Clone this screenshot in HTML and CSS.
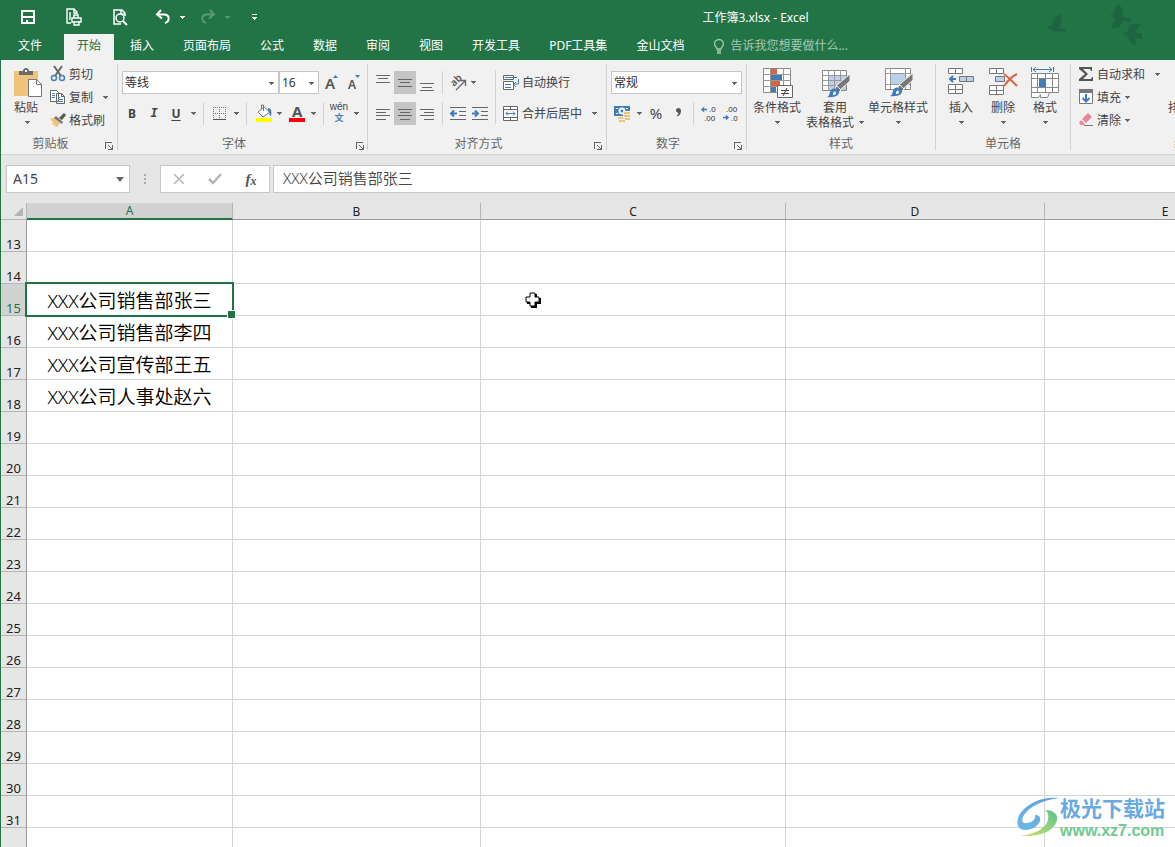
FILE: index.html
```html
<!DOCTYPE html>
<html lang="zh-CN">
<head>
<meta charset="utf-8">
<title>工作簿3.xlsx - Excel</title>
<link rel="stylesheet" href="styles.css">
</head>
<body>
<svg class="defs" aria-hidden="true">
  <symbol id="down" viewBox="0 0 5 3"><path d="M0 0h5v1H0zM1 1h3v1H1zM2 2h1v1H2z"/></symbol>
  <symbol id="launcher" viewBox="0 0 8 8"><path d="M0 0h7v1H1v6H0z M7 3h1v5H3V7h3V6H5V5H4V4H3V3h1v1h1v1h1v1h1z"/></symbol>
  <symbol id="brush" viewBox="0 0 24 24"><path d="M23 0v7L13 16l-4-4z" fill="#777" stroke="#f1f1f1"/><path d="M10 12l4 4-2 2-4-4z" fill="#777" stroke="#f1f1f1"/><path d="M0 23c3-1 2-4 4-7 2-2 7-2 8 1 1 4-4 7-12 6z" fill="#3f7cb8"/><path d="M6 19c1-2 3-2 3 0s-2 2-3 2z" fill="#fff"/></symbol>
</svg>
<div class="app">
  <header class="top">
    <svg class="birds" viewBox="0 0 110 60" aria-hidden="true"><path d="M27 15l2 0c1 5-1 9-1 13l5 1 1 3-6-1-4 1-4-2-6-3 6-1c0-5 3-9 7-11zM85 5c2-2 6 2 6 12l7 1 1 4-8-1c-3 7-6 7-11 7-1-4 3-6 3-9l-5-4 4-1c0-4 1-7 3-9zM97 25c5-2 9-2 12 0-2 3-5 4-5 7l6 2v5l-7-1 1 5c-1 1-1 3 0 3-5-2-8-6-8-10l-5-3 5-1z"/></svg>
    <div class="titlebar">
      <div class="quick">
        <button aria-label="保存"><svg width="16" height="16"><path fill="#fff" fill-rule="evenodd" d="M1 1h14v14H1zM3 3v4h10V3zM3 9v4h2v-4zm8 0v4h2v-4zM5 10v3h1v-2h2v2h3v-4H5z"/></svg></button>
        <button aria-label="打印"><svg width="18" height="18" fill="none" stroke="#fff" stroke-width="1.4"><path d="M6 15H2V1h7l3 3v2M9 1v4h3M5 4v8"/><path d="M9 10V7h4v3M7 10h9v4H7zM9 13v4h5v-4"/></svg></button>
        <button aria-label="打印预览"><svg width="16" height="17" fill="none" stroke="#fff" stroke-width="1.5"><path d="M9 15H2V1h8l3 3v3M9 1v4h4"/><circle cx="8" cy="9" r="4"/><path d="M11 12l4 4" stroke-width="2"/></svg></button>
        <button aria-label="撤消"><svg width="16" height="16" fill="none" stroke="#fff" stroke-width="2"><path d="M6 1L2 5.500l5 4M2 5.500h7c6 0 6 7 1 8.500"/></svg></button>
        <button class="mini" aria-label="撤消选项"><svg width="5" height="3"><use href="#down"/></svg></button>
        <button class="faded" aria-label="恢复"><svg width="16" height="16" fill="none" stroke="#fff" stroke-width="2"><path d="M10 1l4 4.500-5 4M14 5.500H7c-6 0-6 7-1 8.500"/></svg></button>
        <button class="mini faded" aria-label="恢复选项"><svg width="5" height="3"><use href="#down"/></svg></button>
        <button class="custom" aria-label="自定义快速访问工具栏"><svg width="5" height="7"><path fill="#fff" d="M0 0h5v1H0zM0 3h5v1H0zM1 4h3v1H1zM2 5h1v1H2z"/></svg></button>
      </div>
      <h1>工作簿3.xlsx - Excel</h1>
    </div>
    <nav class="tabs">
      <button class="file">文件</button><button class="active">开始</button><button>插入</button><button>页面布局</button><button>公式</button><button>数据</button><button>审阅</button><button>视图</button><button>开发工具</button><button>PDF工具集</button><button>金山文档</button>
      <button class="tell"><svg width="12" height="15" fill="none" stroke="#a5c9b3" stroke-width="1.300"><path d="M4 10C4 8 1.500 7.500 1.500 5a4.500 4.500 0 0 1 9 0C10.500 7.500 8 8 8 10zM4 12h4M4 14h4"/></svg>告诉我您想要做什么...</button>
    </nav>
  </header>

  <section class="ribbon" aria-label="开始">
    <div class="group clip">
      <div class="body">
        <button class="big paste"><svg width="30" height="32"><path fill="#edc47a" d="M1 5h24v25H1z"/><path fill="#6b6b6b" d="M6 5h4c0-4 6-4 6 0h4v4H6z"/><path fill="#f0f0f0" d="M12 4h2v2h-2z"/><path d="M15.500 13.500h8l5 5v12h-13z" fill="#fff" stroke="#777"/><path d="M23.500 13.500v5h5" fill="none" stroke="#777"/></svg><span>粘贴</span><svg class="dn" width="5" height="3"><use href="#down"/></svg></button>
        <div class="stack">
          <button><svg width="16" height="16" fill="none"><path d="M4 0l7 10M12 0L5 10" stroke="#666" stroke-width="2"/><circle cx="4" cy="12" r="2.500" stroke="#4a80b8" stroke-width="1.500"/><circle cx="12" cy="12" r="2.500" stroke="#4a80b8" stroke-width="1.500"/></svg>剪切</button>
          <button><svg width="16" height="16" fill="#fff" stroke="#666"><path d="M.5 1.500h6l2 2v9h-8zM6.500 4.500h5l3 3v7h-8zM11.500 4.500v3h3"/><path stroke="#4a80b8" d="M2 4.500h3M2 6.500h3M2 8.500h3M8 8.500h2M8 10.500h5M8 12.500h5"/></svg>复制<svg class="dn far" width="5" height="3"><use href="#down"/></svg></button>
          <button><svg width="16" height="16"><path fill="#edc47a" d="M0 7l6-2 5 5-4 5-3-1 1-2-3 1 1-3z"/><path d="M6 4l7 6-1 2-8-6z" fill="#777"/><path d="M9 6l5-5 2 2-4 5z" fill="#555"/></svg>格式刷</button>
        </div>
      </div>
      <footer>剪贴板<button class="launch" aria-label="剪贴板设置"><svg width="8" height="8"><use href="#launcher"/></svg></button></footer>
    </div>

    <div class="group font">
      <div class="body rows">
        <div class="line">
          <span class="combo family"><select aria-label="字体"><option>等线</option></select><svg width="5" height="3"><use href="#down"/></svg></span>
          <span class="combo size"><select aria-label="字号"><option>16</option></select><svg width="5" height="3"><use href="#down"/></svg></span>
          <button class="tool" aria-label="增大字号"><svg width="22" height="22"><text x="6" y="17" class="ltr big-a">A</text><path fill="#3f7cb8" d="M14 6l2.500-3L19 6z"/></svg></button>
          <button class="tool" aria-label="减小字号"><svg width="22" height="22"><text x="7" y="17" class="ltr small-a">A</text><path fill="#3f7cb8" d="M14 3h5l-2.500 3z"/></svg></button>
        </div>
        <div class="line">
          <button class="tool bold">B</button><button class="tool ital">I</button><button class="tool under">U</button><button class="arrow" aria-label="下划线选项"><svg width="5" height="3"><use href="#down"/></svg></button>
          <i class="sep"></i>
          <button class="tool" aria-label="边框"><svg width="22" height="22" stroke="#777"><path stroke-dasharray="1 1" d="M5 4.500h13M5 10.500h13M5.500 4v12M11.500 4v12M17.500 4v12"/><path stroke="#555" d="M5 16.500h13"/></svg></button><button class="arrow" aria-label="边框选项"><svg width="5" height="3"><use href="#down"/></svg></button>
          <i class="sep"></i>
          <button class="tool" aria-label="填充颜色"><svg width="22" height="22"><path fill="#ff0" d="M5 15h16v4H5z"/><path d="M7 9l6-5 6 5-7 5z" fill="#fff" stroke="#777"/><path d="M12.500 8V2h-2v4" fill="none" stroke="#777"/><path d="M17 5c3 0 4 3 3 8-2 0-1-4-3-5z" fill="#3f7cb8"/></svg></button><button class="arrow" aria-label="填充颜色选项"><svg width="5" height="3"><use href="#down"/></svg></button>
          <button class="tool" aria-label="字体颜色"><svg width="22" height="22"><text x="7" y="14" class="ltr mid-a">A</text><path fill="#f00" d="M4 15h16v4H4z"/></svg></button><button class="arrow" aria-label="字体颜色选项"><svg width="5" height="3"><use href="#down"/></svg></button>
          <i class="sep"></i>
          <button class="tool pinyin"><span>wén</span><b>文</b></button><button class="arrow" aria-label="拼音选项"><svg width="5" height="3"><use href="#down"/></svg></button>
        </div>
      </div>
      <footer>字体<button class="launch" aria-label="字体设置"><svg width="8" height="8"><use href="#launcher"/></svg></button></footer>
    </div>

    <div class="group align">
      <div class="body">
        <div class="rows">
          <div class="line">
            <button class="tool" aria-label="顶端对齐"><svg width="22" height="22" stroke="#666"><path d="M4 3.500h14M6 6.500h10M4 10.500h14"/></svg></button><button class="tool on" aria-label="垂直居中"><svg width="22" height="22" stroke="#666"><path d="M4 7.500h14M6 10.500h10M4 14.500h14"/></svg></button><button class="tool" aria-label="底端对齐"><svg width="22" height="22" stroke="#666"><path d="M4 11.500h14M6 15.500h10M4 18.500h14"/></svg></button>
            <i class="sep"></i>
            <button class="tool" aria-label="方向"><svg width="22" height="22"><text class="ltr tilt" transform="translate(7 15) rotate(-45)">ab</text><path d="M9 18l9-9M13 8.500h5.500V14" fill="none" stroke="#666" stroke-width="1.300"/></svg></button><button class="arrow close" aria-label="方向选项"><svg width="5" height="3"><use href="#down"/></svg></button>
          </div>
          <div class="line">
            <button class="tool" aria-label="左对齐"><svg width="22" height="22" stroke="#666"><path d="M4 6.500h14M4 9.500h10M4 12.500h14M4 16.500h10"/></svg></button><button class="tool on" aria-label="居中"><svg width="22" height="22" stroke="#666"><path d="M4 6.500h14M6 9.500h10M4 12.500h14M6 16.500h10"/></svg></button><button class="tool" aria-label="右对齐"><svg width="22" height="22" stroke="#666"><path d="M4 6.500h14M8 9.500h10M4 12.500h14M8 16.500h10"/></svg></button>
            <i class="sep"></i>
            <button class="tool" aria-label="减少缩进量"><svg width="22" height="22" stroke="#666"><path d="M3 4.500h16M12 8.500h7M12 12.500h7M3 16.500h16"/><path d="M10 10.500H4M7 7.500l-3 3 3 3" stroke="#3f7cb8" stroke-width="2" fill="none"/></svg></button><button class="tool" aria-label="增加缩进量"><svg width="22" height="22" stroke="#666"><path d="M3 4.500h16M12 8.500h7M12 12.500h7M3 16.500h16"/><path d="M3 10.500h6M6 7.500l3 3-3 3" stroke="#3f7cb8" stroke-width="2" fill="none"/></svg></button>
          </div>
        </div>
        <i class="sep tall"></i>
        <div class="rows">
          <button class="wide"><svg width="16" height="16" fill="none" stroke="#666"><path d="M.5.500h10v4H.500zM.5 6.500h10v8H.500z" fill="#fff"/><path stroke="#3f7cb8" d="M2 2.500h12M2 9.500h6M2 12.500h6M15.500 4v5H11M13 7l-2.500 2.500L13 12"/></svg>自动换行</button>
          <button class="wide"><svg width="16" height="16" fill="#fff" stroke="#666"><path d="M.5.500h14v14H.500zM0 3.500h15M0 11.500h15M7.500 0v3M7.500 12v3"/><path stroke="#3f7cb8" fill="none" d="M3 7.500h9M5 5.500l-2 2 2 2M10 5.500l2 2-2 2"/></svg>合并后居中<svg class="dn far" width="5" height="3"><use href="#down"/></svg></button>
        </div>
      </div>
      <footer>对齐方式<button class="launch" aria-label="对齐设置"><svg width="8" height="8"><use href="#launcher"/></svg></button></footer>
    </div>

    <div class="group number">
      <div class="body rows">
        <div class="line"><span class="combo format"><select aria-label="数字格式"><option>常规</option></select><svg width="5" height="3"><use href="#down"/></svg></span></div>
        <div class="line">
          <button class="tool" aria-label="会计数字格式"><svg width="22" height="22"><path fill="#3f7cb8" d="M3 3h16v10H3z"/><path fill="#fff" d="M5 5h2v1H5zM15 5h2v1h-2zM5 10h2v1H5z"/><circle cx="11" cy="8" r="3.500" fill="#fff"/><circle cx="11" cy="8" r="1.500" fill="#3f7cb8"/><path fill="#f1f1f1" d="M12 8h8v10h-5v2H6v-6h6z"/><path fill="#edc47a" d="M13 9h6v2h-6zM13 12h6v2h-6zM14 15h5v2h-5zM7 14h5v2H7zM8 17h6v2H8z"/></svg></button><button class="arrow" aria-label="会计格式选项"><svg width="5" height="3"><use href="#down"/></svg></button>
          <button class="tool pct">%</button><button class="tool" aria-label="千位分隔样式"><svg width="22" height="22"><path fill="#555" d="M9 7.500a2.500 2.500 0 0 1 5 0c0 3-1 5-4 6v-1c1-1 2-2 1-3-1 0-2-1-2-2z"/></svg></button>
          <i class="sep"></i>
          <button class="tool" aria-label="增加小数位数"><svg width="22" height="22"><text x="11" y="9" class="dec">.0</text><text x="6" y="18" class="dec">.00</text><path d="M9 6.500H4M6 4.500l-2 2 2 2" stroke="#3f7cb8" stroke-width="1.500" fill="none"/></svg></button><button class="tool" aria-label="减少小数位数"><svg width="22" height="22"><text x="6" y="9" class="dec">.00</text><text x="11" y="18" class="dec">.0</text><path d="M3 14.500h5M6 12.500l2 2-2 2" stroke="#3f7cb8" stroke-width="1.500" fill="none"/></svg></button>
        </div>
      </div>
      <footer>数字<button class="launch" aria-label="数字设置"><svg width="8" height="8"><use href="#launcher"/></svg></button></footer>
    </div>

    <div class="group style">
      <div class="body">
        <button class="big cond"><svg width="32" height="32"><path fill="#fff" stroke="#888" d="M2.500 2.500h27v24h-27z"/><path stroke="#999" d="M2 8.500h28M2 14.500h28M2 20.500h28M9.500 2v24M22.500 2v24"/><path fill="#dc6141" d="M10 3h6v5h-6zM10 15h9v5h-9z"/><path fill="#3f7cb8" d="M10 9h11v5H10zM10 21h5v5h-5z"/><path fill="#fff" stroke="#666" d="M16.500 19.500h15v12h-15z"/><path stroke="#444" d="M20 24.500h8M20 27.500h8M26 22l-4 8"/></svg><span>条件格式</span><svg class="dn" width="5" height="3"><use href="#down"/></svg></button>
        <button class="big table"><svg width="32" height="32"><path fill="#fff" stroke="#888" d="M3.500 4.500h24v20h-24z"/><path fill="#bdd0e9" d="M10 10h17v14H10z"/><path stroke="#999" d="M3 9.500h24M3 14.500h24M3 19.500h24M9.500 4v20M15.500 4v20M21.500 4v20"/><use href="#brush" x="8" y="8" width="24" height="24"/></svg><span>套用</span><span class="with">表格格式<svg class="dn" width="5" height="3"><use href="#down"/></svg></span></button>
        <button class="big cell"><svg width="32" height="32"><path fill="#fff" stroke="#888" d="M3.500 2.500h25v21h-25z"/><path stroke="#999" d="M3 7.500h25M3 18.500h25M8.500 2v21M23.500 2v21"/><path fill="#bdd0e9" d="M9 8h14v10H9z"/><use href="#brush" x="8" y="7" width="24" height="24"/></svg><span>单元格样式</span><svg class="dn" width="5" height="3"><use href="#down"/></svg></button>
      </div>
      <footer>样式</footer>
    </div>

    <div class="group cells">
      <div class="body">
        <button class="big"><svg width="32" height="32" fill="#fff" stroke="#777"><path d="M3.500 2.500h14v5h-14zM10.500 2v5M3.500 18.500h14v9h-14zM10.500 18v9M3 23.500h14"/><path fill="#bdd0e9" d="M14.500 10.500h14v5h-14zM21.500 10v5"/><path stroke="#3f7cb8" stroke-width="2" fill="none" d="M11 13H5M8 10l-3 3 3 3"/></svg><span>插入</span><svg class="dn" width="5" height="3"><use href="#down"/></svg></button>
        <button class="big"><svg width="32" height="32" fill="#fff" stroke="#777"><path d="M2.500 2.500h14v5h-14zM9.500 2v5M2.500 19.500h14v9h-14zM9.500 19v9M2 24.500h14"/><path fill="#bdd0e9" d="M8.500 10.500h9v5h-9z"/><path stroke="#dc6141" stroke-width="2" fill="none" d="M17 8c4 3 9 8 13 12M30 8c-5 2-10 8-13 12"/></svg><span>删除</span><svg class="dn" width="5" height="3"><use href="#down"/></svg></button>
        <button class="big"><svg width="32" height="32" fill="#fff" stroke="#888"><path d="M2.500 7.500h27v19h-27zM2 12.500h27M2 21.500h27M8.500 7v19M16.500 7v19M23.500 7v19M2.500 26.500v5h7l2-3v3h7l2-5"/><path fill="#3f7cb8" stroke="none" d="M10 13h7v8h-7z"/><path stroke="#3f7cb8" fill="none" d="M2.500 1v5M24.500 1v5M4 3.500h19M7 1L4 3.500 7 6M20 1l3 2.500L20 6"/></svg><span>格式</span><svg class="dn" width="5" height="3"><use href="#down"/></svg></button>
      </div>
      <footer>单元格</footer>
    </div>

    <div class="group edit">
      <div class="body">
        <div class="stack">
          <button><svg width="16" height="16"><path fill="#555" d="M1 1h13v4h-1l-1-2H5l5 5-5 5h8l1-2h1v4H1v-2l6-5-6-5z"/></svg>自动求和<svg class="dn far" width="5" height="3"><use href="#down"/></svg></button>
          <button><svg width="16" height="16"><path fill="#fff" stroke="#777" d="M1.500.500h13v14h-13z"/><path fill="#777" d="M1 0h14v4H1z"/><path stroke="#3f7cb8" stroke-width="2" fill="none" d="M8 5v7M4.500 9L8 12.500 11.500 9"/></svg>填充<svg class="dn near" width="5" height="3"><use href="#down"/></svg></button>
          <button><svg width="16" height="16"><path fill="#e8879b" d="M4 7l6-6 4 4-6 6z"/><path fill="#e8879b" d="M3 8l4 4-1 1H3l-2-2z"/><path stroke="#777" d="M6 13.500h9"/></svg>清除<svg class="dn near" width="5" height="3"><use href="#down"/></svg></button>
        </div>
        <button class="big sort"><svg width="32" height="32" stroke="#777" fill="none"><path d="M4 4h24L18 16v10l-4 3V16z"/></svg><span>排序和筛选</span></button>
      </div>
      <footer>编辑</footer>
    </div>
  </section>

  <section class="formula" aria-label="编辑栏">
    <div class="namebox"><input aria-label="名称框" value="A15"><button aria-label="名称列表"><svg width="8" height="5"><path fill="#666" d="M0 0h8L4 5z"/></svg></button></div>
    <svg class="dots" width="2" height="11" fill="#aaa"><path d="M0 0h2v2H0zM0 4h2v2H0zM0 8h2v2H0z"/></svg>
    <div class="fx">
      <button aria-label="取消"><svg width="12" height="12" stroke="#b5b5b5" stroke-width="1.500"><path d="M1 1l10 10M11 1L1 11"/></svg></button>
      <button aria-label="输入"><svg width="14" height="12" fill="none" stroke="#b5b5b5" stroke-width="2.500"><path d="M1 6l4 4 8-9"/></svg></button>
      <button class="fn" aria-label="插入函数">f<sub>x</sub></button>
    </div>
    <input class="entry" aria-label="公式" value="XXX公司销售部张三">
  </section>

  <main class="sheet">
    <table>
      <colgroup><col class="c0"><col class="ca"><col class="cb"><col class="cc"><col class="cd"><col class="ce"></colgroup>
      <thead><tr><th class="corner"><svg width="9" height="9"><path fill="#b5b5b5" d="M9 0v9H0z"/></svg></th><th class="cur">A</th><th>B</th><th>C</th><th>D</th><th>E</th></tr></thead>
      <tbody>
        <tr><th>13</th><td></td><td></td><td></td><td></td><td></td></tr>
        <tr><th>14</th><td></td><td></td><td></td><td></td><td></td></tr>
        <tr><th class="cur">15</th><td class="picked">XXX公司销售部张三</td><td></td><td></td><td></td><td></td></tr>
        <tr><th>16</th><td>XXX公司销售部李四</td><td></td><td></td><td></td><td></td></tr>
        <tr><th>17</th><td>XXX公司宣传部王五</td><td></td><td></td><td></td><td></td></tr>
        <tr><th>18</th><td>XXX公司人事处赵六</td><td></td><td></td><td></td><td></td></tr>
        <tr><th>19</th><td></td><td></td><td></td><td></td><td></td></tr>
        <tr><th>20</th><td></td><td></td><td></td><td></td><td></td></tr>
        <tr><th>21</th><td></td><td></td><td></td><td></td><td></td></tr>
        <tr><th>22</th><td></td><td></td><td></td><td></td><td></td></tr>
        <tr><th>23</th><td></td><td></td><td></td><td></td><td></td></tr>
        <tr><th>24</th><td></td><td></td><td></td><td></td><td></td></tr>
        <tr><th>25</th><td></td><td></td><td></td><td></td><td></td></tr>
        <tr><th>26</th><td></td><td></td><td></td><td></td><td></td></tr>
        <tr><th>27</th><td></td><td></td><td></td><td></td><td></td></tr>
        <tr><th>28</th><td></td><td></td><td></td><td></td><td></td></tr>
        <tr><th>29</th><td></td><td></td><td></td><td></td><td></td></tr>
        <tr><th>30</th><td></td><td></td><td></td><td></td><td></td></tr>
        <tr><th>31</th><td></td><td></td><td></td><td></td><td></td></tr>
        <tr><th></th><td></td><td></td><td></td><td></td><td></td></tr>
      </tbody>
    </table>
    <svg class="pointer" width="17" height="17" aria-hidden="true"><path d="M7 3h6v4h4v6h-4v4H7v-4H3V7h4z"/><path d="M6 2h5v4h4v5h-4v4H6v-4H2V6h4z" fill="#fff" stroke="#000"/></svg>
  </main>

  <aside class="mark">
    <svg width="42" height="42" viewBox="0 0 42 42"><defs><linearGradient id="g1" x1="0" y1="1" x2="1" y2="0"><stop offset="0" stop-color="#6fb6e6"/><stop offset="1" stop-color="#5a9fe0"/></linearGradient><linearGradient id="g2" x1="0" y1="1" x2="1" y2="0"><stop offset="0" stop-color="#d6e070"/><stop offset="1" stop-color="#56c48c"/></linearGradient></defs><path fill="url(#g1)" d="M42 1C24-1 6 8 1 21c-2 7 1 12 7 12 7 0 13-4 15-9 1-4-1-6-5-6 1 4-3 8-8 8-5 1-6-3-3-8C13 9 26 3 42 1z"/><path fill="url(#g2)" d="M28 13c7 0 13 3 12 10C37 35 22 40 3 39c15-2 27-8 28-17 1-4 0-7-3-9z"/></svg>
    <div><strong>极光下载站</strong><span>www.xz7.com</span></div>
  </aside>
</div>
</body>
</html>
```
FILE: styles.css
```css
* { box-sizing: border-box; }
body { margin: 0; font: 12px/15px "Noto Sans", "Noto Sans CJK SC", sans-serif; color: #444; overflow: hidden; }
button { border: 0; padding: 0; margin: 0; background: none; font: inherit; color: inherit; white-space: nowrap; }
svg { flex: none; display: block; overflow: visible; }
.defs { position: absolute; width: 0; height: 0; }
.app { position: relative; height: 100vh; display: flex; flex-direction: column; border-left: 1px solid #217346; background: #e6e6e6; overflow: hidden; }

.top { position: relative; background: #227447; color: #fff; flex: none; }
.birds { position: absolute; right: 33px; top: 0; width: 110px; height: 60px; fill: #1c6540; }
.titlebar { display: flex; height: 34px; align-items: center; }
.quick { display: flex; align-items: center; padding-left: 18px; }
.quick button { width: 18px; height: 30px; margin-right: 28px; display: grid; place-items: center; fill: #fff; }
.quick button:nth-child(4), .quick button:nth-child(6) { margin-right: 5px; }
.quick button:nth-child(3) { margin-right: 25px; }
.quick .mini { width: 10px; margin-right: 12px; }
.quick .mini.faded { margin-right: 15px; }
.quick .faded { opacity: .25; }
.quick .custom { width: 14px; margin-right: 0; }
h1 { flex: 1; margin: 0; padding-left: 75px; text-align: center; font-size: 12px; font-weight: 400; }
.tabs { display: flex; gap: 3px; height: 26px; }
.tabs button { padding: 0 13px 2px; line-height: 24px; }
.tabs .file { width: 60px; padding: 0 2px 2px 0; }
.tabs .active { background: #f1f1f1; color: #217346; }
.tabs .tell { display: flex; align-items: center; gap: 5px; color: #a5c9b3; }

.ribbon { display: flex; flex: none; padding: 4px 0; background: #f1f1f1; border-bottom: 1px solid #d2d2d2; overflow: hidden; fill: #666; }
.group { flex: none; display: flex; flex-direction: column; height: 86px; border-right: 1px solid #d2d2d2; padding: 0 4px; }
.clip { width: 117px; }
.font { width: 250px; padding: 0 3px; }
.align { width: 239px; }
.number { width: 140px; }
.style { width: 189px; padding: 0 3px; }
.cells { width: 135px; }
.edit { width: 228px; }
.body { flex: 1; display: flex; min-height: 0; }
.rows { display: flex; flex-direction: column; gap: 8px; padding-top: 7px; }
.group footer { position: relative; height: 14px; line-height: 16px; text-align: center; color: #666; }
.clip footer, .font footer, .align footer, .number footer { padding-right: 17px; }
.launch { position: absolute; right: 0; bottom: 0; }
.line { display: flex; height: 23px; align-items: stretch; }
.tool { flex: none; width: 22px; display: grid; place-items: center; }
.on { background: #c5c5c5; }
.arrow { flex: none; width: 12px; display: grid; place-items: center; }
.arrow.close { width: 8px; }
.sep { flex: none; width: 1px; margin: 0 4px; background: #d2d2d2; }
.sep.tall { margin: 6px 4px 12px; }
.combo { position: relative; border: 1px solid #c6c6c6; background: #fff; }
.combo select { appearance: none; width: 100%; height: 100%; border: 0; padding: 0 2px; background: none; font: inherit; color: #333; display: block; }
.combo svg { position: absolute; right: 4px; top: 10px; pointer-events: none; }
.family { width: 157px; margin-left: 1px; }
.size { width: 40px; }
.format { width: 131px; }
.ltr { font-family: "Noto Sans", sans-serif; font-weight: 600; fill: #555; }
.big-a { font-size: 15px; }
.small-a { font-size: 12px; }
.mid-a { font-size: 15px; font-weight: 700; }
.tilt { font-size: 10px; }
.dec { font: 8px "Liberation Sans", sans-serif; fill: #333; }
.bold { font-weight: 700; }
.ital { font-family: "DejaVu Sans Mono", monospace; font-style: italic; font-weight: 700; font-size: 12px; }
.under { font-weight: 700; text-decoration: underline; text-underline-offset: 2px; }
.pct { font-size: 15px; }
.pinyin { display: flex; flex-direction: column; align-items: center; justify-content: center; font: 10px/10px "Liberation Sans", "Noto Sans CJK SC", sans-serif; }
.pinyin b { color: #3f7cb8; font-size: 9px; line-height: 13px; }
.wide { display: flex; align-items: center; gap: 3px; height: 23px; padding-left: 3px; }
.stack { display: flex; flex-direction: column; gap: 1px; margin-top: -1px; }
.stack button { display: flex; align-items: center; gap: 3px; height: 22px; }
.far { margin-left: 7px; }
.near { margin-left: 1px; }
.big { flex: none; width: 42px; padding-top: 2px; display: flex; flex-direction: column; align-items: center; }
.big > svg:first-child { margin-bottom: 2px; }
.big .dn { margin-top: 6px; }
.paste { width: 45px; }
.paste span { padding-right: 3px; }
.cond { width: 54px; }
.table { width: 62px; }
.cell { width: 64px; }
.with { display: flex; gap: 5px; }
.edit { padding-left: 7px; }
.sort { width: 60px; margin-left: 8px; }

.formula { flex: none; display: flex; align-items: center; padding: 10px 0 10px 5px; font-size: 14px; }
.namebox { display: flex; width: 124px; height: 28px; border: 1px solid #c6c6c6; background: #fff; }
.namebox input { flex: 1; min-width: 0; border: 0; padding: 0 6px 2px; background: none; font: inherit; color: #444; }
.namebox button { width: 18px; display: grid; place-items: center; }
.dots { margin: 0 14px; }
.fx { display: flex; width: 110px; height: 28px; border: 1px solid #c6c6c6; background: #fff; }
.fx button { flex: 1; display: grid; place-items: center; }
.fx .fn { display: block; font: italic 700 15px/24px "Liberation Serif", serif; color: #555; }
.fn sub { font-size: 12px; line-height: 0; vertical-align: -1px; }
.entry { flex: 1; min-width: 0; height: 28px; margin-left: 3px; border: 1px solid #c6c6c6; border-right: 0; padding: 0 9px 4px; background: #fff; font: 350 15px "Noto Sans", "Noto Sans CJK SC", sans-serif; color: #444; }

.sheet { position: relative; flex: 1; min-height: 0; overflow: hidden; background: #fff; }
table { table-layout: fixed; border-collapse: separate; border-spacing: 0; width: 1285px; }
.c0 { width: 26px; }
.ca { width: 206px; }
.cb { width: 248px; }
.cc { width: 305px; }
.cd { width: 259px; }
.ce { width: 241px; }
th, td { padding: 0; border-right: 1px solid #d4d4d4; border-bottom: 1px solid #d4d4d4; text-align: center; }
td { height: 32px; font-size: 19px; line-height: 28px; font-weight: 350; color: #000; white-space: nowrap; padding-top: 3px; }
th { background: #e6e6e6; font-weight: 400; color: #222; }
thead th { height: 17px; padding-top: 1px; line-height: 15px; border-right-color: #b5b5b5; border-bottom-color: #999; }
thead .cur { background: #d2d2d2; color: #217346; border-bottom: 2px solid #217346; padding-top: 1px; line-height: 14px; }
.corner svg { margin-left: 13px; }
thead .corner { border-bottom-color: #b5b5b5; }
tbody th { vertical-align: bottom; font-size: 13px; line-height: 14px; border-right-color: #999; border-bottom-color: #b5b5b5; }
tbody .cur { background: #d2d2d2; color: #217346; }
.picked { position: relative; }
.picked::before { content: ""; position: absolute; inset: -2px -2px -2px -2px; border: 2px solid #217346; }
.picked::after { content: ""; position: absolute; right: -4px; bottom: -4px; width: 7px; height: 7px; background: #217346; border: 1px solid #fff; }
.pointer { position: absolute; left: 523px; top: 88px; }

.mark { position: absolute; right: 10px; bottom: 6px; display: flex; align-items: center; gap: 1px; }
.mark div { display: flex; flex-direction: column; gap: 2px; }
.mark strong { font: 700 21px/24px "Noto Sans CJK SC", sans-serif; color: #6aa9e2; }
.mark span { font: 700 16px/20px "Liberation Sans", sans-serif; color: #6ecb93; }
```
